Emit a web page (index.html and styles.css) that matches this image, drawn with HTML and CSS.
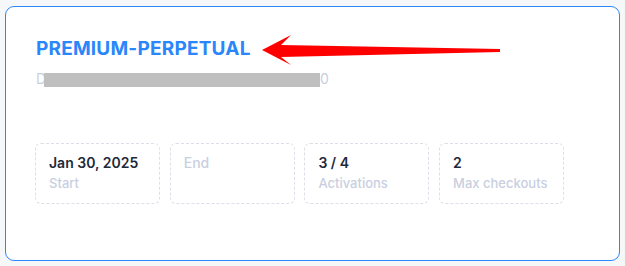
FILE: index.html
```html
<!DOCTYPE html>
<html>
<head>
<meta charset="utf-8">
<link rel="stylesheet" href="styles.css">
</head>
<body>
<div class="card">
  <h1 class="title">PREMIUM-PERPETUAL</h1>
  <div class="subtitle">D<span class="redact"></span>0</div>
  <div class="stats">
    <div class="stat"><div class="value">Jan 30, 2025</div><div class="label">Start</div></div>
    <div class="stat"><div class="value muted">End</div></div>
    <div class="stat"><div class="value">3 / 4</div><div class="label">Activations</div></div>
    <div class="stat"><div class="value">2</div><div class="label">Max checkouts</div></div>
  </div>
  <svg class="arrow" width="625" height="266" viewBox="0 0 625 266">
    <path d="M262 50 L291 35 L281 45 L500 49 L500 52 L281 57 L291 65 Z" fill="#ff0000"/>
  </svg>
</div>
</body>
</html>
```
FILE: styles.css
```css
html, body {
  margin: 0;
  padding: 0;
}
body {
  background: #f6f7f8;
  font-family: Inter, "Noto Sans", sans-serif;
  width: 625px;
  height: 266px;
  overflow: hidden;
}
.card {
  position: relative;
  box-sizing: border-box;
  margin: 6px 0 0 5px;
  width: 615px;
  height: 255px;
  background: #ffffff;
  border: 1px solid #2a88f8;
  border-radius: 9px;
  padding: 30px 30px 0 30px;
}
.title {
  margin: 0;
  font-size: 19px;
  line-height: 24px;
  font-weight: 700;
  color: #2a86fb;
  letter-spacing: 0.2px;
}
.subtitle {
  margin-top: 8px;
  font-size: 14px;
  line-height: 20px;
  color: #c9cfdf;
}
.redact {
  display: inline-block;
  width: 276px;
  height: 14px;
  background: #bfbfbf;
  vertical-align: -3px;
  margin-left: -2px;
}
.stats {
  display: flex;
  gap: 9.7px;
  margin-top: 54px;
  margin-left: -1px;
}
.stat {
  box-sizing: border-box;
  width: 125px;
  border: 1px dashed #dcdfe7;
  border-radius: 6px;
  padding: 9px 13px 11px;
}
.value {
  font-size: 14px;
  line-height: 20px;
  font-weight: 600;
  color: #1e293b;
}
.value.muted {
  color: #c9cfdf;
  font-weight: 500;
}
.label {
  margin-top: 1px;
  font-size: 13px;
  line-height: 18px;
  color: #c9cfdf;
  font-weight: 500;
}
.arrow {
  position: absolute;
  left: -6px;
  top: -7px;
  pointer-events: none;
}
```
